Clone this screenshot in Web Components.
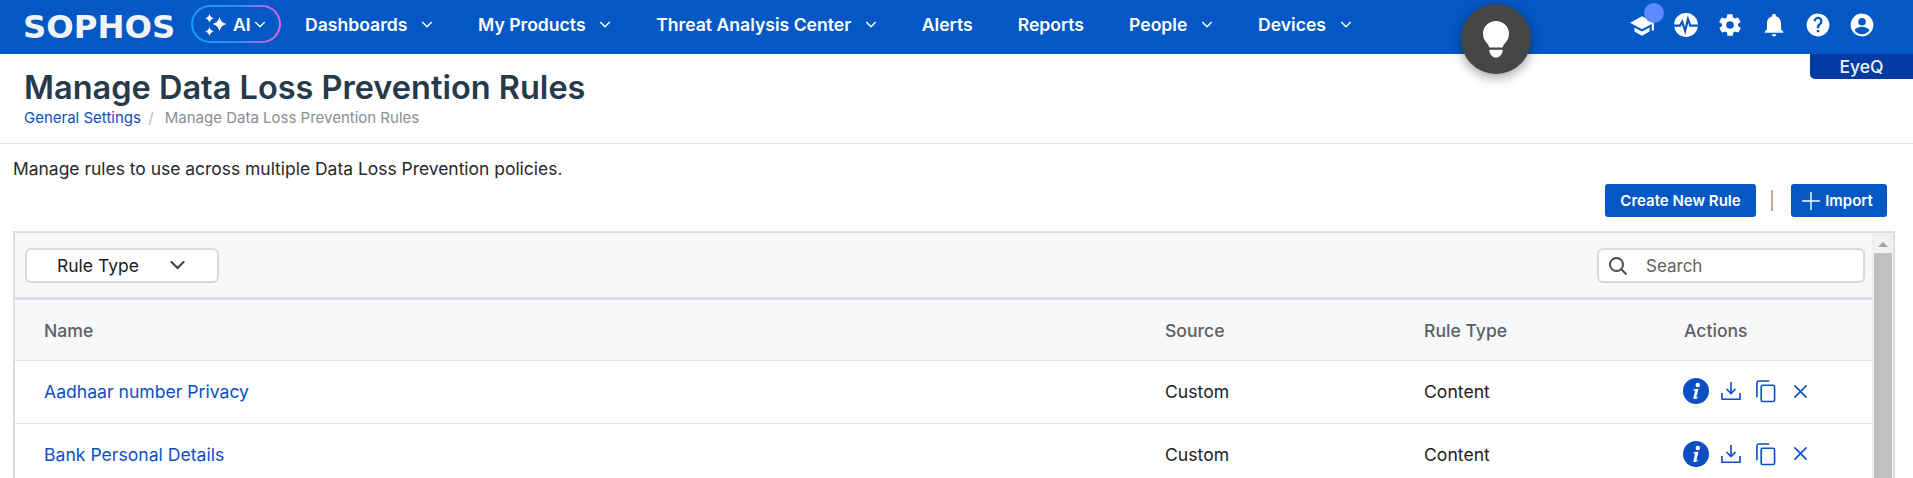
<!DOCTYPE html>
<html>
<head>
<meta charset="utf-8">
<title>Manage Data Loss Prevention Rules</title>
<style>
    html, body { margin: 0; padding: 0; background: #fff; height: 478px; overflow: hidden; }
    body { font-family: Inter, "Liberation Sans", sans-serif; }
</style>
</head>
<body>
<dlp-app></dlp-app>
<script>
const CHEVRON = `<svg viewBox="0 0 14 8" width="12" height="7" fill="none" stroke="currentColor" stroke-width="1.700"><path d="M1.500 1l5.500 5.500L12.500 1"/></svg>`;

class NavItem extends HTMLElement {
    constructor() {
        super();
        this.attachShadow({ mode: "open" });
    }
    connectedCallback() {
        const menu = this.hasAttribute("menu");
        this.shadowRoot.innerHTML = `
        <style>
            :host { display: inline-flex; align-items: center; gap: 13.600px; color: #fff; font-size: 17.6px; font-weight: 600; white-space: nowrap; }
            svg { display: block; }
        </style>
        <slot></slot>${menu ? CHEVRON : ""}
    `;
    }
}

class AiPill extends HTMLElement {
    constructor() {
        super();
        this.attachShadow({ mode: "open" });
        this.shadowRoot.innerHTML = `
        <style>
            :host { display: inline-flex; align-items: center; box-sizing: border-box; width: 90px; height: 38px; padding-left: 11px; border-radius: 19px; border: 2px solid transparent;
                background: linear-gradient(#0358c6, #0358c6) padding-box, linear-gradient(90deg, #1c9bf5 0%, #2a8ff0 50%, #e85fe0 100%) border-box;
                color: #fff; font-size: 17.6px; font-weight: 600; }
            span { margin: 0 3px 0 5px; }
        </style>
        <svg viewBox="0 0 24 24" width="24" height="24" fill="#fff">
            <path d="M15.500 5Q16.800 10.700 22.500 12 16.800 13.300 15.500 19 14.200 13.300 8.500 12 14.200 10.700 15.500 5z"/>
            <path d="M5.500 1.800Q6.300 5.500 10 6.300 6.300 7.100 5.500 10.800 4.700 7.100 1 6.300 4.700 5.500 5.500 1.800z"/>
            <path d="M5.500 15Q6.300 18.700 10 19.500 6.300 20.300 5.500 24 4.700 20.300 1 19.500 4.700 18.700 5.500 15z"/>
        </svg>
        <span>AI</span>${CHEVRON}
    `;
    }
}

class TopBar extends HTMLElement {
    constructor() {
        super();
        this.attachShadow({ mode: "open" });
        this.shadowRoot.innerHTML = `
        <style>
            :host { display: flex; align-items: center; height: 54px; background: #0358c6; color: #fff; padding-left: 23px; padding-right: 38px; position: relative; }
            .logo { font-family: "DejaVu Sans", sans-serif; font-weight: 700; font-size: 32px; line-height: 1; width: 168px; transform: scaleX(1.01); transform-origin: left center; color: #f1f3f7; white-space: nowrap; }
            .left { display: flex; align-items: center; padding-bottom: 6px; }
            nav { display: flex; align-items: center; margin-left: 24px; gap: 45px; }
            .icons { margin-left: auto; display: flex; align-items: center; gap: 18px; position: relative; padding-bottom: 4px; }
            .icons svg { display: block; width: 26px; height: 26px; fill: #fff; }
            .dot { position: absolute; left: 15px; top: -9px; width: 20px; height: 20px; border-radius: 50%; background: #5b8cff; }
        </style>
        <div class="logo">SOPHOS</div>
        <div class="left">
            <ai-pill></ai-pill>
            <nav>
                <nav-item menu>Dashboards</nav-item>
                <nav-item menu>My Products</nav-item>
                <nav-item menu>Threat Analysis Center</nav-item>
                <nav-item>Alerts</nav-item>
                <nav-item>Reports</nav-item>
                <nav-item menu>People</nav-item>
                <nav-item menu>Devices</nav-item>
            </nav>
        </div>
        <div class="icons">
            <svg viewBox="0 0 24 24"><path d="M12 4L1 10l11 6 9-4.900V17h2v-7z"/><path d="M5 14.200V18l7 4 7-4v-3.800L12 18z"/></svg>
            <svg viewBox="0 0 24 24"><circle cx="12" cy="12" r="11"/><path d="M1 12.500h5.500l2-3.500 2.700 8.500 2.600-11 2.200 6H23" fill="none" stroke="#0358c6" stroke-width="2"/></svg>
            <svg viewBox="0 0 24 24"><path d="M19.400 13a7.800 7.800 0 0 0 0-2l2.100-1.600a.5.500 0 0 0 .1-.6l-2-3.500a.5.500 0 0 0-.6-.2l-2.500 1a7.300 7.300 0 0 0-1.700-1l-.4-2.700a.5.500 0 0 0-.5-.4h-4a.5.500 0 0 0-.5.400l-.4 2.700a7.300 7.300 0 0 0-1.700 1l-2.500-1a.5.500 0 0 0-.6.200l-2 3.500a.5.500 0 0 0 .1.600L4.600 11a7.800 7.800 0 0 0 0 2l-2.100 1.600a.5.500 0 0 0-.1.600l2 3.500c.1.200.4.300.6.200l2.500-1c.5.400 1.100.8 1.700 1l.4 2.700c0 .2.200.4.500.4h4c.3 0 .5-.2.500-.4l.4-2.700c.6-.2 1.200-.6 1.700-1l2.500 1c.2.100.5 0 .6-.2l2-3.500a.5.500 0 0 0-.1-.6zM12 15.500a3.500 3.500 0 1 1 0-7 3.500 3.500 0 0 1 0 7z"/></svg>
            <svg viewBox="0 0 24 24"><path d="M12 22.500c1.200 0 2.100-.9 2.100-2h-4.200c0 1.100.9 2 2.100 2zM18.500 16v-5.500c0-3.200-1.700-5.800-4.800-6.500v-.8a1.700 1.700 0 0 0-3.400 0V4c-3.100.7-4.800 3.300-4.800 6.500V16L3.500 18v1.200h17V18z"/></svg>
            <svg viewBox="0 0 24 24"><path d="M12 1.500a10.500 10.500 0 1 0 0 21 10.500 10.500 0 0 0 0-21zm1.100 17.300h-2.200v-2.200h2.200zm2.200-7.700l-1 1c-.8.800-1.200 1.400-1.200 2.900h-2.200v-.6c0-1.200.4-2.300 1.200-3l1.300-1.400c.4-.4.600-.9.600-1.500a2 2 0 1 0-4 0H7.900a4.100 4.100 0 1 1 8.200 0c0 1-.4 1.800-.8 2.600z"/></svg>
            <svg viewBox="0 0 24 24"><path d="M12 1.500a10.500 10.500 0 1 0 0 21 10.500 10.500 0 0 0 0-21zm0 4a3.500 3.500 0 1 1 0 7 3.500 3.500 0 0 1 0-7zm0 15a8.300 8.300 0 0 1-6.700-3.400c.1-2.200 4.500-3.400 6.700-3.400s6.600 1.200 6.700 3.400A8.300 8.300 0 0 1 12 20.500z"/></svg>
            <span class="dot"></span>
        </div>
    `;
    }
}

class BulbButton extends HTMLElement {
    constructor() {
        super();
        this.attachShadow({ mode: "open" });
        this.shadowRoot.innerHTML = `
        <style>
            :host { position: absolute; left: 1461px; top: 4px; width: 70px; height: 70px; border-radius: 50%; background: #454648; box-shadow: 0 3px 12px rgba(0,0,0,.4); display: flex; align-items: center; justify-content: center; }
        </style>
        <svg viewBox="0 0 26 37" width="26" height="37" fill="#fff">
            <path d="M13 0C5.800 0 0 5.700 0 12.700c0 3.900 1.500 6.300 3.200 8.500 1.400 1.800 2.700 3.300 3.300 5.300h13c.6-2 1.900-3.500 3.300-5.300 1.700-2.200 3.200-4.600 3.200-8.500C26 5.700 20.200 0 13 0z"/>
            <path d="M7 28.800h12c.5 0 .8.400.7.900-.4 3.500-3 6.800-6.700 6.800s-6.300-3.300-6.700-6.800c-.1-.5.200-.9.700-.9z"/>
        </svg>
    `;
    }
}

class EyeqTab extends HTMLElement {
    constructor() {
        super();
        this.attachShadow({ mode: "open" });
        this.shadowRoot.innerHTML = `
        <style>
            :host { position: absolute; right: 0; top: 54px; width: 103px; height: 25px; background: #023ba3; color: #eef2fa; border-bottom-left-radius: 5px; font-size: 17.5px; font-weight: 500; display: flex; align-items: center; justify-content: center; box-sizing: border-box; }
        </style>
        <slot></slot>
    `;
    }
}

class PageHeading extends HTMLElement {
    constructor() {
        super();
        this.attachShadow({ mode: "open" });
        this.shadowRoot.innerHTML = `
        <style>
            :host { display: block; box-sizing: border-box; height: 90px; padding: 15px 24px 0; border-bottom: 1px solid #dcdde0; }
            h1 { margin: 0; font-size: 32.5px; line-height: 38px; font-weight: 600; color: #263a4a; }
            .crumbs { margin-top: 2px; font-size: 15px; line-height: 18px; color: #8a8d92; }
            a { color: #0b4fc2; text-decoration: none; }
            i { font-style: normal; color: #b5b7bb; margin: 0 7px 0 3px; }
        </style>
        <h1>Manage Data Loss Prevention Rules</h1>
        <div class="crumbs"><a href="#">General Settings</a> <i>/</i> Manage Data Loss Prevention Rules</div>
    `;
    }
}

class ActionBar extends HTMLElement {
    constructor() {
        super();
        this.attachShadow({ mode: "open" });
        this.shadowRoot.innerHTML = `
        <style>
            :host { display: block; box-sizing: border-box; height: 87px; padding: 14px 26px 0 13px; color: #26282b; font-size: 17.45px; }
            p { margin: 0; line-height: 22px; }
            .btns { display: flex; justify-content: flex-end; align-items: center; margin-top: 4px; }
            button { all: unset; box-sizing: border-box; height: 33px; background: #0358c6; color: #fff; font: 600 15px Inter, sans-serif; border-radius: 3px; display: flex; align-items: center; justify-content: center; }
            .create { width: 151px; }
            .import { width: 96px; gap: 4px; padding-right: 4px; }
            .sep { width: 2px; height: 21px; background: #c9a592; margin: 0 18px 0 15px; }
        </style>
        <p><slot></slot></p>
        <div class="btns">
            <button class="create">Create New Rule</button>
            <span class="sep"></span>
            <button class="import"><svg viewBox="0 0 18 18" width="20" height="20" stroke="#fff" stroke-width="1.300"><path d="M9 1v16M1 9h16"/></svg>Import</button>
        </div>
    `;
    }
}

class RuleRow extends HTMLElement {
    constructor() {
        super();
        this.attachShadow({ mode: "open" });
    }
    connectedCallback() {
        const name = this.getAttribute("name");
        this.shadowRoot.innerHTML = `
        <style>
            :host { display: grid; grid-template-columns: 1121px 259px 260px 1fr; align-items: center; height: 62.500px; box-sizing: border-box; padding-left: 29px; border-bottom: 1px solid #dfe0e3; background: #fff; font-size: 17.6px; color: #1b1c1e; }
            a { color: #0b4fc2; text-decoration: none; }
            .acts { display: flex; align-items: center; margin-left: -1px; padding-bottom: 1px; }
            svg { display: block; flex: none; }
        </style>
        <a href="#">${name}</a>
        <span>${this.getAttribute("source")}</span>
        <span>${this.getAttribute("type")}</span>
        <div class="acts">
            <svg viewBox="0 0 26 26" width="26" height="26"><circle cx="13" cy="13" r="13" fill="#0b4fc2"/><circle cx="14.800" cy="7" r="2.200" fill="#fff"/><path d="M10.500 11.300l5-.6-2.100 8.300c-.1.500.3.700 1.800-.2l-.3 1c-2 1.300-4.800 2-4.500.1l1.600-6.800c.1-.5-.4-.7-1.600-.7z" fill="#fff"/></svg>
            <svg viewBox="0 0 20 20" width="20" height="20" style="margin-left:12px" fill="none" stroke="#0b4fc2" stroke-width="1.600"><path d="M10 1v11M5.500 8l4.500 4.500L14.500 8M1 12v6.200h18V12"/></svg>
            <svg viewBox="0 0 22 24" width="21" height="24" style="margin-left:14px" fill="none" stroke="#0b4fc2" stroke-width="1.700"><path d="M15 1.500H4A2 2 0 0 0 2 3.500v15"/><rect x="6.500" y="6" width="14" height="17" rx="1.500"/></svg>
            <svg viewBox="0 0 16 16" width="15" height="15" style="margin-left:17px" fill="none" stroke="#0b4fc2" stroke-width="1.700"><path d="M1.500 1.500l13 13M14.500 1.500l-13 13"/></svg>
        </div>
    `;
    }
}

class RuleTable extends HTMLElement {
    constructor() {
        super();
        this.attachShadow({ mode: "open" });
        this.shadowRoot.innerHTML = `
        <style>
            :host { display: grid; grid-template-columns: 1fr 20px; box-sizing: border-box; margin: 0 18px 0 13px; border: 2px solid #dcdde0; border-bottom: 0; height: 249px; overflow: hidden; background: #f7f8fa; }
            .main { border-right: 1px solid #eceded; min-width: 0; }
            .tools { display: flex; justify-content: space-between; align-items: center; height: 67px; box-sizing: border-box; padding: 0 7px 0 10px; border-bottom: 3px solid #dcdde0; }
            .ctl { box-sizing: border-box; height: 35px; border: 2px solid #d8d9dc; border-radius: 6px; background: #fff; display: flex; align-items: center; font-size: 17.5px; }
            .dd { width: 194px; padding-left: 30px; gap: 30px; color: #1b1c1e; }
            .dd svg { color: #3a3d40; width: 17px; height: 10px; }
            .search { width: 268px; padding: 1px 0 0 9px; gap: 18px; font-size: 17px; color: #5c5f63; }
            .head { display: grid; grid-template-columns: 1121px 259px 260px 1fr; align-items: center; height: 61px; box-sizing: border-box; padding-left: 29px; border-bottom: 1px solid #dfe0e3; color: #5d6063; font-size: 17.6px; font-weight: 500; }
            .bar { background: #f1f1f1; display: flex; flex-direction: column; align-items: center; padding: 0 1px; }
            .arrow { width: 0; height: 0; margin: 9px 0 6px; border: 5px solid transparent; border-top: 0; border-bottom: 5px solid #a3a3a3; }
            .thumb { flex: 1; align-self: stretch; background: #c0c0c0; }
        </style>
        <div class="main">
            <div class="tools">
                <div class="ctl dd">Rule Type ${CHEVRON}</div>
                <div class="ctl search"><svg viewBox="0 0 20 20" width="20" height="20" fill="none" stroke="#4a4d50" stroke-width="2"><circle cx="8.500" cy="8.500" r="6.500"/><path d="M13.500 13.500l5 5"/></svg>Search</div>
            </div>
            <div class="head"><span>Name</span><span>Source</span><span>Rule Type</span><span>Actions</span></div>
            <slot></slot>
        </div>
        <div class="bar"><span class="arrow"></span><span class="thumb"></span></div>
    `;
    }
}

class DlpApp extends HTMLElement {
    constructor() {
        super();
        this.attachShadow({ mode: "open" });
        this.shadowRoot.innerHTML = `
        <style>
            :host { display: block; position: relative; width: 1913px; height: 478px; overflow: hidden; font-family: Inter, "Liberation Sans", sans-serif; }
        </style>
        <top-bar></top-bar>
        <page-heading></page-heading>
        <action-bar>Manage rules to use across multiple Data Loss Prevention policies.</action-bar>
        <rule-table>
            <rule-row name="Aadhaar number Privacy" source="Custom" type="Content"></rule-row>
            <rule-row name="Bank Personal Details" source="Custom" type="Content"></rule-row>
        </rule-table>
        <bulb-button></bulb-button>
        <eyeq-tab>EyeQ</eyeq-tab>
    `;
    }
}

customElements.define("nav-item", NavItem);
customElements.define("ai-pill", AiPill);
customElements.define("top-bar", TopBar);
customElements.define("bulb-button", BulbButton);
customElements.define("eyeq-tab", EyeqTab);
customElements.define("page-heading", PageHeading);
customElements.define("action-bar", ActionBar);
customElements.define("rule-row", RuleRow);
customElements.define("rule-table", RuleTable);
customElements.define("dlp-app", DlpApp);
</script>
</body>
</html>
